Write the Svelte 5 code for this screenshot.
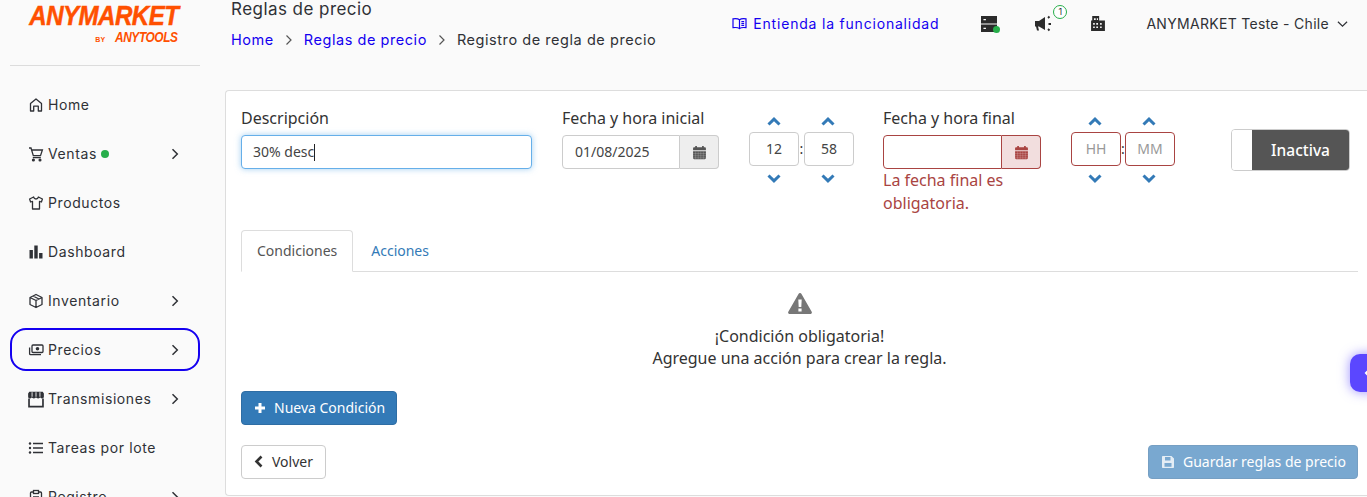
<script>
const nav = [
  { label: 'Home', icon: 'home' },
  { label: 'Ventas', icon: 'cart', dot: true, arrow: true },
  { label: 'Productos', icon: 'shirt' },
  { label: 'Dashboard', icon: 'bars' },
  { label: 'Inventario', icon: 'box', arrow: true },
  { label: 'Precios', icon: 'money', arrow: true, focus: true },
  { label: 'Transmisiones', icon: 'store', arrow: true },
  { label: 'Tareas por lote', icon: 'list' },
  { label: 'Registro', icon: 'clip', arrow: true }
];
</script>

{#snippet calendar()}
  <svg viewBox="0 0 14 14" width="15" height="15" fill="currentColor">
    <path d="M1 3.200c0-.6.500-1 1-1h1V1h1.600v1.200h4.800V1H11v1.200h1c.5 0 1 .4 1 1V5H1zM1 5.800h12v6.400c0 .6-.5 1-1 1H2c-.5 0-1-.4-1-1z" />
    <path d="M1 8h12M1 10h12M1 12h12M3.400 6v7M5.800 6v7M8.200 6v7M10.600 6v7" stroke="#fff" stroke-opacity=".35" stroke-width=".5" />
  </svg>
{/snippet}

{#snippet chevron(up)}
  <svg class="spin" viewBox="0 0 14 9" width="14" height="9" fill="none" stroke="#337ab7" stroke-width="3">
    <path d={up ? 'M1.500 7.500 7 2.200l5.500 5.300' : 'M1.500 1.500 7 6.800l5.500-5.300'} />
  </svg>
{/snippet}

{#snippet time(h, m, error)}
  <div class="time">
    <div class="spins">{@render chevron(true)}{@render chevron(true)}</div>
    <div class="time-inputs" class:error>
      <span class="time-box" class:ph={error}>{h}</span>
      <b>:</b>
      <span class="time-box" class:ph={error}>{m}</span>
    </div>
    <div class="spins">{@render chevron(false)}{@render chevron(false)}</div>
  </div>
{/snippet}

{#snippet navIcon(name)}
  <svg class:wide={name === 'store'} viewBox="0 0 16 16" width="16" height="16" fill="none" stroke="#2f3136" stroke-width="1.300">
    {#if name === 'home'}
      <path d="M2.500 14V6.600L8 2l5.500 4.600V14h-3.200V9.200H5.700V14z" stroke-linejoin="round" />
    {:else if name === 'cart'}
      <path d="M1 2h2l2.300 7.600h7.200L14.400 4H4" />
      <path d="M4.800 11.600h8" />
      <circle cx="5.400" cy="14" r=".9" fill="#2f3136" />
      <circle cx="12" cy="14" r=".9" fill="#2f3136" />
    {:else if name === 'shirt'}
      <path d="M5.600 2 1.600 4l1 3 1.900-.6V14h7V6.400l1.900.6 1-3-4-2c-.3 1.200-1.200 2-2.400 2s-2.100-.8-2.400-2z" stroke-linejoin="round" />
    {:else if name === 'bars'}
      <path d="M1.500 6h3.400v8.500H1.500zM6.300 1.500h3.400v13H6.300zM11.100 9h3.400v5.500h-3.400z" fill="#2f3136" stroke="none" />
    {:else if name === 'box'}
      <path d="M8 1.500 14 4.500v7L8 14.500l-6-3v-7zM2 4.500 8 7.500l6-3M8 7.500v7M5 3l6 3" stroke-linejoin="round" />
    {:else if name === 'money'}
      <rect x="4" y="3" width="11" height="7.500" rx="1" />
      <circle cx="9.500" cy="6.700" r="1.800" fill="#2f3136" stroke="none" />
      <path d="M1.600 5.500v6.200c0 .6.500 1 1 1H13" />
    {:else if name === 'store'}
      <path d="M1 6V3l1-1.500h12L15 3v3c0 1-.8 1.500-1.700 1.500-.8 0-1.300-.5-1.600-1-.3.500-.9 1-1.800 1S8.300 7 8 6.500C7.700 7 7 7.500 6.100 7.500s-1.500-.5-1.800-1c-.3.500-.8 1-1.600 1C1.800 7.500 1 7 1 6z" fill="#2f3136" stroke="none" />
      <path d="M4.500 2v4M8 2v4M11.500 2v4" stroke="#fafafa" stroke-width=".8" />
      <path d="M1.800 7.500v7.200h12.400V7.500" stroke-width="1.500" />
    {:else if name === 'list'}
      <path d="M5 3.500h10M5 8h10M5 12.500h10" />
      <circle cx="2" cy="3.500" r="1.200" fill="#2f3136" stroke="none" />
      <circle cx="2" cy="8" r="1.200" fill="#2f3136" stroke="none" />
      <circle cx="2" cy="12.500" r="1.200" fill="#2f3136" stroke="none" />
    {:else}
      <rect x="2.500" y="3" width="11" height="12" rx="1" />
      <rect x="5.500" y="1.500" width="5" height="3" fill="#fafafa" />
      <path d="M5 8h6M5 11h6" />
    {/if}
  </svg>
{/snippet}

<div class="page">
  <aside class="sidebar">
    <div class="logo">
      <div class="logo-main"><span>ANYMARKET</span></div>
      <div class="logo-sub"><small>BY</small> <span>ANYTOOLS</span></div>
    </div>
    <nav>
      {#each nav as item}
        <div class="nav-item" class:focus={item.focus}>
          <span class="nav-icon">{@render navIcon(item.icon)}</span>
          <span>{item.label}</span>
          {#if item.dot}<i class="dot"></i>{/if}
          {#if item.arrow}
            <svg class="nav-arrow" viewBox="0 0 8 12" width="8" height="12" fill="none" stroke="#2f3136" stroke-width="1.500"><path d="M1.500 1.200 6.300 6l-4.800 4.800" /></svg>
          {/if}
        </div>
      {/each}
    </nav>
  </aside>

  <main>
    <header>
      <div class="heading">
        <div class="title">Reglas de precio</div>
        <div class="crumbs">
          <span class="crumb-link">Home</span>
          <svg viewBox="0 0 8 12" width="8" height="12" fill="none" stroke="#555" stroke-width="1.200"><path d="M1.500 1.500 6 6l-4.500 4.500" /></svg>
          <span class="crumb-link">Reglas de precio</span>
          <svg viewBox="0 0 8 12" width="8" height="12" fill="none" stroke="#555" stroke-width="1.200"><path d="M1.500 1.500 6 6l-4.500 4.500" /></svg>
          <span>Registro de regla de precio</span>
        </div>
      </div>
      <div class="top-actions">
        <div class="help">
          <svg viewBox="0 0 16 14" width="15" height="13" fill="none" stroke="#1400f0" stroke-width="1.300"><path d="M8 3C6.500 1.800 4 1.600 1 2v9.500c3-.4 5.500-.2 7 1 1.500-1.200 4-1.400 7-1V2c-3-.4-5.500-.2-7 1zM8 3v9.500M10 5h3M10 7h3M10 9h3" /></svg>
          Entienda la funcionalidad
        </div>
        <span class="top-icon server">
          <svg viewBox="1 1 13 13" width="16" height="16" fill="#2b2b2b"><path d="M1 1h13v6H1zM1 8h13v6H1z" /><path d="M3 4h2M3 11h2" stroke="#fff" stroke-width="1" /></svg>
          <i class="server-dot"></i>
        </span>
        <span class="top-icon horn">
          <svg viewBox="0 0 20 18" width="20" height="18" fill="#2b2b2b"><path d="M1 6h4l6-4v13l-6-3.500H4l1 4H3l-1-4H1z" /><path d="M14 3l1.500-1.500M14.500 9H17M14 14l1.500 1.500" stroke="#2b2b2b" stroke-width="1.800" /></svg>
          <i class="badge">1</i>
        </span>
        <span class="top-icon city">
          <svg viewBox="1 1 12 13" width="14" height="15" fill="#2b2b2b"><path fill-rule="evenodd" d="M2 1h6v4h5v9H1V5h1zM3.500 3v1.500H5V3zm2.500 0v1.500h1V3zM2.800 7v1.500h1.400V7zm2.700 0v1.500H7V7zm3.300 0v1.500h1.400V7zM2.800 10v1.500h1.400V10zm2.700 0v1.500H7V10zm3.300 0v1.500h1.400V10z" /></svg>
        </span>
        <div class="account">
          ANYMARKET Teste - Chile
          <svg viewBox="0 0 12 8" width="11" height="8" fill="none" stroke="#2f3136" stroke-width="1.300"><path d="M1 1.500 6 6.300l5-4.800" /></svg>
        </div>
      </div>
    </header>

    <section class="card">
      <div class="form-row">
        <div class="field desc">
          <label for="desc">Descripción</label>
          <div class="input focused" id="desc">30% desc<i class="caret"></i></div>
        </div>
        <div class="field date">
          <span class="label">Fecha y hora inicial</span>
          <div class="group">
            <div class="input joined">01/08/2025</div>
            <span class="addon">{@render calendar()}</span>
          </div>
        </div>
        {@render time('12', '58', false)}
        <div class="field date final">
          <span class="label">Fecha y hora final</span>
          <div class="group error">
            <div class="input joined"></div>
            <span class="addon">{@render calendar()}</span>
          </div>
          <p class="error-text">La fecha final es obligatoria.</p>
        </div>
        {@render time('HH', 'MM', true)}
        <div class="toggle"><span class="toggle-off"></span><span class="toggle-on">Inactiva</span></div>
      </div>

      <div class="tabs">
        <span class="tab active">Condiciones</span>
        <span class="tab">Acciones</span>
      </div>

      <div class="empty">
        <svg viewBox="0 0 24 21" width="24" height="21"><path fill="#777" d="M12 0c.7 0 1.200.4 1.500.9l10.200 17.800c.6 1-.1 2.300-1.400 2.300H1.700C.4 21-.3 19.700.3 18.700L10.500.9C10.800.4 11.300 0 12 0z" /><path fill="#fff" d="M10.300 6.500h3.400l-.4 7.500h-2.600zM10.400 15.500h3.200v2.900h-3.200z" /></svg>
        <p>¡Condición obligatoria!<br />Agregue una acción para crear la regla.</p>
      </div>

      <button class="btn primary new">
        <svg viewBox="0 0 12 12" width="12" height="12" fill="#fff"><path d="M4.500 1h3v3.500H11v3H7.500V11h-3V7.500H1v-3h3.500z" /></svg>
        Nueva Condición
      </button>

      <div class="footer">
        <button class="btn back">
          <svg viewBox="0 0 9 13" width="9" height="13" fill="none" stroke="#333" stroke-width="2.600"><path d="M7.500 1.500 2.500 6.500l5 5" /></svg>
          Volver
        </button>
        <button class="btn primary save">
          <svg viewBox="0 0 14 14" width="14" height="14" fill="#d7e4f0"><path fill-rule="evenodd" d="M1 2c0-.6.400-1 1-1h8.500L13 3.500V12c0 .6-.4 1-1 1H2c-.6 0-1-.4-1-1zm3 0v3.500h5.500V2zM3.500 8v3.800h7V8z" /></svg>
          Guardar reglas de precio
        </button>
      </div>
    </section>
  </main>

  <div class="floating">
    <svg viewBox="0 0 8 12" width="8" height="12" fill="none" stroke="#fff" stroke-width="2"><path d="M6 2 2 6l4 4" /></svg>
  </div>
</div>

<style>
  :global(body) {
    margin: 0;
    overflow: hidden;
    background: #fafafa;
  }

  .page {
    display: flex;
    height: 497px;
    overflow: hidden;
    position: relative;
    background: #fafafa;
    color: #333;
    font-family: "Noto Sans", sans-serif;
  }

  .sidebar {
    width: 225px;
    flex: none;
    padding: 0 25px 0 10px;
    box-sizing: border-box;
    font-family: Inter, sans-serif;
    color: #2f3136;
  }

  .logo {
    height: 66px;
    box-sizing: border-box;
    display: flex;
    flex-direction: column;
    align-items: flex-end;
    border-bottom: 1px solid #dcdcdc;
    padding: 2px 22px 0 20px;
    margin-bottom: 17px;
    color: #ff5000;
    font-family: "Liberation Sans", sans-serif;
    font-style: italic;
    font-weight: 700;
  }

  .logo span {
    display: inline-block;
    transform-origin: right center;
  }

  .logo-main {
    font-size: 28px;
    line-height: 28px;
    letter-spacing: -.6px;
    white-space: nowrap;
  }

  .logo-main span {
    transform: scaleX(.86);
    -webkit-text-stroke: .5px #ff5000;
  }

  .logo-sub {
    font-size: 14px;
    line-height: 14px;
    letter-spacing: -.5px;
    white-space: nowrap;
  }

  .logo-sub span {
    transform: scaleX(.85);
  }

  .logo-sub small {
    font-size: 7px;
    font-style: normal;
    letter-spacing: 0;
    margin-right: -4px;
  }

  nav {
    display: flex;
    flex-direction: column;
    gap: 6px;
  }

  .nav-item {
    height: 43px;
    box-sizing: border-box;
    display: flex;
    align-items: center;
    padding-left: 18px;
    padding-right: 19px;
    font-size: 14px;
    letter-spacing: .6px;
    border: 2px solid transparent;
    border-radius: 16px;
    white-space: nowrap;
  }

  .nav-item.focus {
    border-color: #1400f0;
  }

  .nav-icon {
    width: 20px;
    display: flex;
    flex: none;
    margin-left: -2px;
  }

  .wide {
    width: 18px;
    height: 18px;
    margin-left: -1px;
    flex: none;
  }

  .dot {
    width: 8px;
    height: 8px;
    border-radius: 50%;
    background: #27ae4a;
    margin-left: 4px;
  }

  .nav-arrow {
    margin-left: auto;
  }

  main {
    flex: 1;
    min-width: 0;
  }

  header {
    height: 90px;
    display: flex;
    justify-content: space-between;
    padding-left: 6px;
    box-sizing: border-box;
  }

  .title {
    font-size: 17px;
    line-height: 18px;
    letter-spacing: .45px;
    font-family: Inter, sans-serif;
    color: #2f3136;
  }

  .crumbs {
    display: flex;
    align-items: center;
    gap: 11px;
    margin-top: 12px;
    font-family: Inter, sans-serif;
    font-size: 14.500px;
    letter-spacing: .55px;
    line-height: 20px;
    color: #2f3136;
  }

  .crumb-link {
    color: #1400f0;
  }

  .top-actions {
    display: flex;
    align-items: center;
    height: 47px;
    font-family: Inter, sans-serif;
    font-size: 14px;
    color: #2f3136;
    padding-right: 19px;
  }

  .help {
    display: flex;
    align-items: center;
    gap: 6px;
    color: #1400f0;
    letter-spacing: .8px;
    margin-right: 42px;
  }

  .top-icon {
    position: relative;
    display: flex;
  }

  .server {
    margin-right: 37px;
  }

  .server-dot {
    position: absolute;
    right: -3px;
    bottom: -1px;
    width: 7px;
    height: 7px;
    border-radius: 50%;
    background: #27ae4a;
  }

  .horn {
    margin-right: 37px;
  }

  .badge {
    position: absolute;
    left: 19px;
    top: -10px;
    width: 14px;
    height: 14px;
    box-sizing: border-box;
    border: 1px solid #27ae4a;
    border-radius: 50%;
    background: #fff;
    font-style: normal;
    font-size: 9px;
    line-height: 12px;
    text-align: center;
  }

  .city {
    margin-right: 41px;
  }

  .account {
    display: flex;
    align-items: center;
    gap: 8px;
    letter-spacing: .3px;
  }

  .card {
    background: #fff;
    border: 1px solid #ddd;
    border-right: 0;
    border-radius: 4px 0 0 4px;
    height: 406px;
    box-sizing: border-box;
    padding: 15px 9px 0 15px;
  }

  .form-row {
    display: flex;
    align-items: flex-start;
    height: 124px;
  }

  .field {
    display: flex;
    flex-direction: column;
  }

  .field label,
  .label {
    font-size: 16px;
    line-height: 24px;
    height: 29px;
    color: #333;
  }

  .desc {
    width: 291px;
    margin-right: 30px;
  }

  .input {
    height: 34px;
    box-sizing: border-box;
    background: #fff;
    border: 1px solid #ccc;
    border-radius: 4px;
    padding: 0 11px;
    font-size: 14px;
    line-height: 32px;
    color: #444;
  }

  .input.focused {
    border-color: #66afe9;
    box-shadow: 0 0 6px rgba(102, 175, 233, .6);
  }

  .caret {
    display: inline-block;
    width: 1px;
    height: 17px;
    background: #222;
    vertical-align: -4px;
  }

  .date {
    width: 157px;
    margin-right: 30px;
  }

  .final {
    width: 158px;
  }

  .group {
    display: flex;
  }

  .input.joined {
    flex: 1;
    min-width: 0;
    padding: 0 12px;
    border-radius: 4px 0 0 4px;
  }

  .addon {
    width: 39px;
    height: 34px;
    box-sizing: border-box;
    display: flex;
    align-items: center;
    justify-content: center;
    background: #eee;
    border: 1px solid #ccc;
    border-left: 0;
    border-radius: 0 4px 4px 0;
    color: #555;
  }

  .group.error .input {
    border-color: #a94442;
  }

  .group.error .addon {
    background: #f2dede;
    border-color: #a94442;
    color: #a94442;
  }

  .error-text {
    margin: 0;
    font-size: 16px;
    line-height: 23px;
    color: #a94442;
  }

  .time {
    width: 105px;
    margin-right: 29px;
    padding-top: 11px;
  }

  .final + .time {
    width: 104px;
    margin-right: 56px;
  }

  .spins {
    display: flex;
    justify-content: space-between;
    height: 9px;
    padding: 0 19px 0 18px;
  }

  .final + .time .spins {
    padding-left: 17px;
  }

  .spin {
    display: block;
  }

  .time-inputs {
    display: flex;
    align-items: center;
    justify-content: space-between;
    margin: 6px 0 8px;
  }

  .time-inputs b {
    font-weight: 400;
    font-size: 14px;
    line-height: 1;
  }

  .time-box {
    width: 50px;
    height: 34px;
    box-sizing: border-box;
    border: 1px solid #ccc;
    border-radius: 4px;
    font-size: 14px;
    line-height: 32px;
    text-align: center;
    color: #444;
  }

  .time-inputs.error .time-box {
    border-color: #a94442;
  }

  .time-box.ph {
    color: #999;
  }

  .toggle {
    display: flex;
    width: 119px;
    height: 42px;
    margin-top: 23px;
    box-sizing: border-box;
    border: 1px solid #ccc;
    border-radius: 4px;
    overflow: hidden;
  }

  .toggle-off {
    width: 20px;
    background: #fff;
  }

  .toggle-on {
    flex: 1;
    background: #555;
    color: #fff;
    font-size: 15.500px;
    font-weight: 500;
    line-height: 40px;
    text-align: center;
  }

  .tabs {
    display: flex;
    height: 42px;
    box-sizing: border-box;
    border-bottom: 1px solid #ddd;
  }

  .tab {
    height: 41px;
    padding: 0 16px;
    font-size: 14px;
    line-height: 41px;
    color: #337ab7;
    margin-left: 2px;
  }

  .tab.active {
    height: 42px;
    color: #555;
    background: #fff;
    border: 1px solid #ddd;
    border-bottom-color: #fff;
    border-radius: 4px 4px 0 0;
    padding: 0 15px;
    margin-left: 0;
    box-sizing: border-box;
    line-height: 39px;
  }

  .empty {
    height: 119px;
    box-sizing: border-box;
    padding-top: 21px;
    text-align: center;
  }

  .empty svg {
    display: block;
    margin: 0 auto;
  }

  .empty p {
    margin: 11px 0 0;
    font-size: 16px;
    line-height: 22px;
    color: #333;
  }

  .btn {
    height: 34px;
    display: inline-flex;
    align-items: center;
    box-sizing: border-box;
    border: 1px solid #ccc;
    border-radius: 4px;
    background: #fff;
    font-family: inherit;
    font-size: 14px;
    color: #333;
    padding: 0 12px 1px;
    gap: 8px;
    white-space: nowrap;
  }

  .btn svg {
    flex: none;
  }

  .btn.primary {
    background: #337ab7;
    border-color: #2e6da4;
    color: #fff;
  }

  .new {
    width: 156px;
    display: flex;
  }

  .footer {
    display: flex;
    justify-content: space-between;
    margin-top: 20px;
  }

  .back {
    width: 85px;
    gap: 9px;
  }

  .save {
    width: 210px;
    opacity: .65;
  }

  .floating {
    position: absolute;
    left: 1350px;
    top: 354px;
    width: 40px;
    height: 38px;
    display: flex;
    align-items: center;
    padding-left: 14px;
    box-sizing: border-box;
    border-radius: 10px;
    background: #5b47ff;
    box-shadow: 0 0 12px rgba(91, 71, 255, .6);
  }
</style>
